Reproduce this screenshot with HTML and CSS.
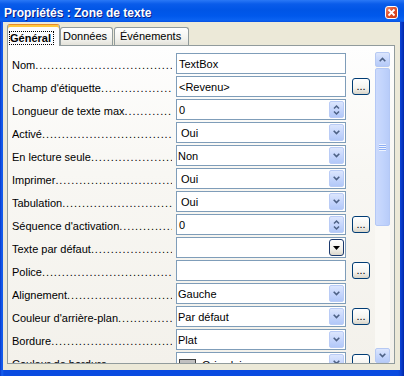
FILE: index.html
```html
<!DOCTYPE html>
<html lang="fr">
<head>
<meta charset="utf-8">
<title>Propriétés : Zone de texte</title>
<link rel="stylesheet" href="styles.css">
</head>
<body>
<div class="window">
  <div class="titlebar">
    <span class="title">Propriétés : Zone de texte</span>
    <span class="close"><svg width="11" height="11" viewBox="0 0 11 11"><path d="M2.5 2.5 L8.5 8.5 M8.5 2.5 L2.5 8.5" stroke="#fff" stroke-width="1.8" fill="none"/></svg></span>
  </div>
  <div class="frame">
    <div class="tabs">
      <div class="tab active"><span class="focus">Général</span></div>
      <div class="tab t2">Données</div>
      <div class="tab t3">Événements</div>
    </div>
    <div class="panel">
      <div class="rows">
        <div class="row">
          <div class="label"><span>Nom</span><span class="dots"></span></div>
          <div class="field"><span class="val">TextBox</span></div>
        </div>
        <div class="row">
          <div class="label"><span>Champ d'étiquette</span><span class="dots"></span></div>
          <div class="field"><span class="val">&lt;Revenu&gt;</span></div>
          <div class="more">...</div>
        </div>
        <div class="row">
          <div class="label"><span>Longueur de texte max</span><span class="dots"></span></div>
          <div class="field"><span class="val">0</span>
            <span class="btn spin"><svg width="7" height="12" viewBox="0 0 7 12"><path d="M1 4.5 L3.5 2 L6 4.5 M1 7.5 L3.5 10 L6 7.5" stroke="#4D6185" stroke-width="1.5" fill="none"/></svg></span>
          </div>
        </div>
        <div class="row">
          <div class="label"><span>Activé</span><span class="dots"></span></div>
          <div class="field"><span class="val ind">Oui</span>
            <span class="btn"><svg width="7" height="5" viewBox="0 0 7 5"><path d="M0.7 0.8 L3.5 3.6 L6.3 0.8" stroke="#4D6185" stroke-width="1.6" fill="none"/></svg></span>
          </div>
        </div>
        <div class="row">
          <div class="label"><span>En lecture seule</span><span class="dots"></span></div>
          <div class="field"><span class="val tight">Non</span>
            <span class="btn"><svg width="7" height="5" viewBox="0 0 7 5"><path d="M0.7 0.8 L3.5 3.6 L6.3 0.8" stroke="#4D6185" stroke-width="1.6" fill="none"/></svg></span>
          </div>
        </div>
        <div class="row">
          <div class="label"><span>Imprimer</span><span class="dots"></span></div>
          <div class="field"><span class="val ind">Oui</span>
            <span class="btn"><svg width="7" height="5" viewBox="0 0 7 5"><path d="M0.7 0.8 L3.5 3.6 L6.3 0.8" stroke="#4D6185" stroke-width="1.6" fill="none"/></svg></span>
          </div>
        </div>
        <div class="row">
          <div class="label"><span>Tabulation</span><span class="dots"></span></div>
          <div class="field"><span class="val ind">Oui</span>
            <span class="btn"><svg width="7" height="5" viewBox="0 0 7 5"><path d="M0.7 0.8 L3.5 3.6 L6.3 0.8" stroke="#4D6185" stroke-width="1.6" fill="none"/></svg></span>
          </div>
        </div>
        <div class="row">
          <div class="label"><span>Séquence d'activation</span><span class="dots"></span></div>
          <div class="field"><span class="val">0</span>
            <span class="btn spin"><svg width="7" height="12" viewBox="0 0 7 12"><path d="M1 4.5 L3.5 2 L6 4.5 M1 7.5 L3.5 10 L6 7.5" stroke="#4D6185" stroke-width="1.5" fill="none"/></svg></span>
          </div>
          <div class="more">...</div>
        </div>
        <div class="row">
          <div class="label"><span>Texte par défaut</span><span class="dots"></span></div>
          <div class="field"><span class="val"></span>
            <span class="btn classic"><svg width="7" height="4" viewBox="0 0 7 4"><path d="M0 0 L7 0 L3.5 4 Z" fill="#000"/></svg></span>
          </div>
        </div>
        <div class="row">
          <div class="label"><span>Police</span><span class="dots"></span></div>
          <div class="field"><span class="val"></span></div>
          <div class="more">...</div>
        </div>
        <div class="row">
          <div class="label"><span>Alignement</span><span class="dots"></span></div>
          <div class="field"><span class="val tight">Gauche</span>
            <span class="btn"><svg width="7" height="5" viewBox="0 0 7 5"><path d="M0.7 0.8 L3.5 3.6 L6.3 0.8" stroke="#4D6185" stroke-width="1.6" fill="none"/></svg></span>
          </div>
        </div>
        <div class="row">
          <div class="label"><span>Couleur d'arrière-plan</span><span class="dots"></span></div>
          <div class="field"><span class="val tight">Par défaut</span>
            <span class="btn"><svg width="7" height="5" viewBox="0 0 7 5"><path d="M0.7 0.8 L3.5 3.6 L6.3 0.8" stroke="#4D6185" stroke-width="1.6" fill="none"/></svg></span>
          </div>
          <div class="more">...</div>
        </div>
        <div class="row">
          <div class="label"><span>Bordure</span><span class="dots"></span></div>
          <div class="field"><span class="val tight">Plat</span>
            <span class="btn"><svg width="7" height="5" viewBox="0 0 7 5"><path d="M0.7 0.8 L3.5 3.6 L6.3 0.8" stroke="#4D6185" stroke-width="1.6" fill="none"/></svg></span>
          </div>
        </div>
        <div class="row">
          <div class="label"><span>Couleur de bordure</span><span class="dots"></span></div>
          <div class="field"><span class="val swatchval"><span class="swatch"></span>Gris clair</span>
            <span class="btn"><svg width="7" height="5" viewBox="0 0 7 5"><path d="M0.7 0.8 L3.5 3.6 L6.3 0.8" stroke="#4D6185" stroke-width="1.6" fill="none"/></svg></span>
          </div>
          <div class="more">...</div>
        </div>
      </div>
      <div class="scrollbar">
        <div class="sbtn"><svg width="7" height="5" viewBox="0 0 7 5"><path d="M0.7 4.2 L3.5 1.4 L6.3 4.2" stroke="#4D6185" stroke-width="1.6" fill="none"/></svg></div>
        <div class="thumb"><span class="grip"></span></div>
        <div class="sbtn down"><svg width="7" height="5" viewBox="0 0 7 5"><path d="M0.7 0.8 L3.5 3.6 L6.3 0.8" stroke="#4D6185" stroke-width="1.6" fill="none"/></svg></div>
      </div>
    </div>
  </div>
</div>
</body>
</html>
```
FILE: styles.css
```css
* { box-sizing: border-box; }
html, body { margin: 0; padding: 0; }
body {
  font-family: "Liberation Sans", Arial, sans-serif;
  font-size: 11px;
  color: #000;
  background: #fff;
}
.window {
  width: 404px;
  height: 376px;
  display: flex;
  flex-direction: column;
  overflow: hidden;
  background: linear-gradient(90deg, #0838C8 0, #1660F0 2px, #0A4BE0 4px, #0A4BE0 398px, #0A3FD0 401px, #0026A8 404px);
}
.titlebar {
  height: 22px;
  flex: none;
  display: flex;
  align-items: center;
  justify-content: space-between;
  padding: 3px 6px 0 4px;
  background: linear-gradient(180deg, #2A78F6 0, #0A5CEA 4px, #0055E6 10px, #0058EC 16px, #0A62F2 20px, #0850E0 22px);
}
.title {
  color: #fff;
  font-weight: bold;
  font-size: 12px;
  text-shadow: 1px 1px 0 #0A1B82;
  white-space: nowrap;
}
.close {
  width: 13px;
  height: 13px;
  border: 1px solid #fff;
  border-radius: 3px;
  background: linear-gradient(135deg, #EE8C6E 0, #E0502C 45%, #CC3A14 100%);
  display: flex;
  align-items: center;
  justify-content: center;
}
.close svg { display: block; }
.frame {
  flex: 1;
  margin: 0 4px 6px 3px;
  background: #ECE9D8;
  padding: 2px 5px 0 4px;
  display: flex;
  flex-direction: column;
}
.tabs {
  display: flex;
  align-items: flex-end;
  height: 21px;
  position: relative;
  z-index: 1;
  flex: none;
}
.tab {
  height: 18px;
  border: 1px solid #919B9C;
  border-bottom: none;
  border-radius: 3px 3px 0 0;
  background: linear-gradient(180deg, #FFFFFF 0, #F3F3EF 60%, #E4E2DA 100%);
  line-height: 16px;
  white-space: nowrap;
}
.tab.t2 { width: 53px; padding-left: 2px; }
.tab.t3 { width: 75px; padding-left: 5px; margin-left: 1px; }
.tab.active {
  width: 53px;
  height: 22px;
  margin-bottom: -1px;
  border-top: 1px solid #E68B2C;
  box-shadow: inset 0 2px 0 #FFC83C;
  background: #FCFCFE;
  padding: 5px 0 0 1px;
  font-weight: bold;
}
.focus {
  display: inline-block;
  border: 1px dotted #000;
  padding: 0 2px 0 0;
  height: 14px;
  line-height: 12px;
}
.panel {
  height: 319px;
  flex: none;
  border: 1px solid #919B9C;
  background: linear-gradient(180deg, #FEFEFE 0, #F8F7F3 40%, #F3F1EB 100%);
  padding: 6px 4px 0 0;
  display: flex;
  overflow: hidden;
}
.rows {
  flex: 1;
  overflow: hidden;
  padding-top: 1px;
}
.row {
  display: flex;
  height: 21px;
  margin-bottom: 2px;
  padding-left: 4px;
}
.label {
  width: 164px;
  flex: none;
  display: flex;
  align-items: center;
  padding: 3px 4px 0 0;
  white-space: nowrap;
  overflow: hidden;
}
.label span:first-child { flex: none; }
.dots {
  flex: 1;
  min-width: 0;
  overflow: hidden;
  letter-spacing: 0.9px;
}
.dots::after {
  content: "............................................................................";
}
.field {
  width: 170px;
  height: 21px;
  flex: none;
  border: 1px solid #7F9DB9;
  background: #fff;
  display: flex;
  align-items: center;
}
.val {
  flex: 1;
  padding-left: 2px;
  white-space: nowrap;
  overflow: hidden;
}
.val.ind { padding-left: 4px; }
.val.tight { padding-left: 1px; }
.swatchval {
  display: flex;
  align-items: center;
  padding-left: 2px;
  padding-top: 4px;
}
.swatch {
  width: 17px;
  height: 12px;
  border: 1px solid #404040;
  background: #C0C0C0;
  margin-right: 6px;
  flex: none;
}
.btn {
  width: 15px;
  height: 17px;
  flex: none;
  margin: 0 1px 0 0;
  border: 1px solid #BACCF6;
  border-radius: 2px;
  background: linear-gradient(180deg, #DCE6FD 0, #C6D6FC 50%, #B2C8F8 100%);
  display: flex;
  align-items: center;
  justify-content: center;
}
.btn svg { display: block; }
.btn.classic {
  border: 1px solid #1C3A6E;
  border-radius: 3px;
  background: linear-gradient(180deg, #FFFFFF 0, #F2F1EC 60%, #DCD8CC 100%);
}
.more {
  width: 18px;
  height: 17px;
  flex: none;
  margin: 2px 0 0 6px;
  border: 1px solid #003C74;
  border-radius: 3px;
  background: linear-gradient(180deg, #FFFFFF 0, #F4F3EE 60%, #D8D4C8 100%);
  font-size: 11px;
  line-height: 11px;
  text-align: center;
  padding-top: 2px;
  letter-spacing: 0;
}
.scrollbar {
  width: 15px;
  flex: none;
  display: flex;
  flex-direction: column;
  background: #FAF9F5;
}
.sbtn {
  height: 15px;
  flex: none;
  border: 1px solid #B6C9F3;
  border-radius: 2px;
  background: linear-gradient(180deg, #DCE6FD 0, #C7D7FC 50%, #B5CAF8 100%);
  display: flex;
  align-items: center;
  justify-content: center;
}
.sbtn svg { display: block; }
.sbtn.down { margin-top: auto; }
.thumb {
  height: 158px;
  flex: none;
  margin-top: 1px;
  border: 1px solid #B4C8F5;
  border-radius: 2px;
  background: linear-gradient(90deg, #CCDAFC 0, #C2D4FC 50%, #B8CCF9 100%);
  display: flex;
  align-items: center;
  justify-content: center;
}
.grip {
  width: 7px;
  height: 7px;
  background: repeating-linear-gradient(180deg, #EEF3FE 0, #EEF3FE 1px, #8CAEF4 1px, #8CAEF4 2px);
}
```
